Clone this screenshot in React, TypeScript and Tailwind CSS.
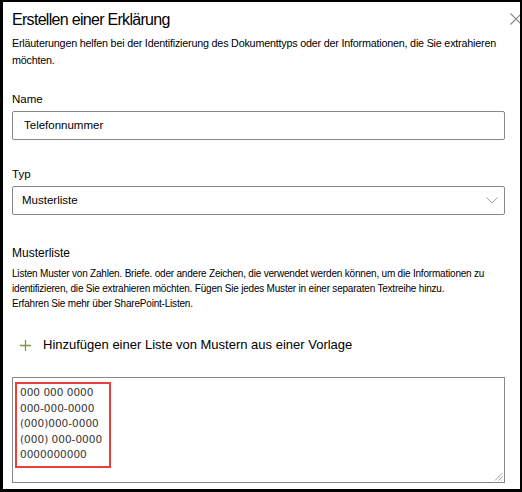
import React from "react";

// ── Small drawings ───────────────────────────────────────────────────────────

const CloseIcon = () => (
  <svg width="12" height="12" viewBox="0 0 12 12" className="block">
    <path d="M0.5 0.5 L11.5 11.5 M11.5 0.5 L0.5 11.5" stroke="#8a8886" strokeWidth="1.2" fill="none" />
  </svg>
);

const ChevronDown = () => (
  <svg width="12" height="7" viewBox="0 0 12 7" className="block">
    <path d="M0.5 0.5 L6 6 L11.5 0.5" stroke="#a19f9d" strokeWidth="1" fill="none" />
  </svg>
);

const PlusIcon = () => (
  <svg width="11" height="11" viewBox="0 0 11 11" className="block">
    <path d="M5.5 0 V11 M0 5.5 H11" stroke="#7a9a3a" strokeWidth="1.3" fill="none" />
  </svg>
);

const ResizeGrip = () => (
  <svg width="9" height="9" viewBox="0 0 9 9" className="block">
    <path d="M8.5 1 L1 8.5 M8.5 4.5 L4.5 8.5 M8.5 7.5 L7.5 8.5" stroke="#a19f9d" strokeWidth="1" fill="none" />
  </svg>
);

// ── Panel ────────────────────────────────────────────────────────────────────

const patterns = ["000 000 0000", "000-000-0000", "(000)000-0000", "(000) 000-0000", "0000000000"];

export default function App() {
  return (
    <div className="w-[522px] h-[492px] bg-white border-black border-l-[3px] border-t-2 border-r-2 border-b-[3px] overflow-hidden font-['Liberation_Sans',Arial,sans-serif] text-black">
      <div className="relative pl-[9px] pr-[15px]">
        {/* Header */}
        <div className="flex items-start justify-between pt-[6px]">
          <h1 className="text-[16px] leading-[24px] font-normal tracking-[-0.7px]">Erstellen einer Erklärung</h1>
          <div className="absolute right-[-2px] top-[11px]">
            <CloseIcon />
          </div>
        </div>
        <p className="text-[10.75px] leading-[17px] tracking-[-0.2px] mt-[3px] whitespace-nowrap">
          Erläuterungen helfen bei der Identifizierung des Dokumenttyps oder der Informationen, die Sie extrahieren
          <br />
          möchten.
        </p>

        {/* Name */}
        <div className="mt-[22px] text-[11.5px] leading-[16px]">Name</div>
        <div className="mt-[4px] h-[29px] border border-[#8a8886] rounded-[2px] flex items-center pl-[11px] text-[11.5px]">
          Telefonnummer
        </div>

        {/* Typ */}
        <div className="mt-[26px] text-[11.5px] leading-[16px]">Typ</div>
        <div className="mt-[4px] h-[29px] border border-[#8a8886] rounded-[2px] flex items-center justify-between pl-[9px] pr-[6px] text-[11.5px]">
          <span>Musterliste</span>
          <ChevronDown />
        </div>

        {/* Musterliste */}
        <div className="mt-[30px] text-[12px] leading-[16px]">Musterliste</div>
        <p className="mt-[5px] text-[10px] leading-[15px] tracking-[-0.2px] whitespace-nowrap">
          Listen Muster von Zahlen. Briefe. oder andere Zeichen, die verwendet werden können, um die Informationen zu
          <br />
          identifizieren, die Sie extrahieren möchten. Fügen Sie jedes Muster in einer separaten Textreihe hinzu.
          <br />
          Erfahren Sie mehr über SharePoint-Listen.
        </p>

        <div className="mt-[25px] flex items-center gap-[12px] pl-[8px] text-[13px] leading-[18px]">
          <PlusIcon />
          <span>Hinzufügen einer Liste von Mustern aus einer Vorlage</span>
        </div>

        {/* Pattern textarea */}
        <div className="relative mt-[23px] h-[106px] border border-[#8a8886] pt-[4px] pl-[2px]">
          <div className="w-[96px] h-[86px] border-2 border-[#e8403a] pl-[3px] pt-[1px] font-['DejaVu_Sans',Verdana,sans-serif] text-[10.5px] leading-[15.5px] text-[#333]">
            {patterns.map((p) => (
              <div key={p}>{p}</div>
            ))}
          </div>
          <div className="absolute right-[1px] bottom-[1px]">
            <ResizeGrip />
          </div>
        </div>
      </div>
    </div>
  );
}
